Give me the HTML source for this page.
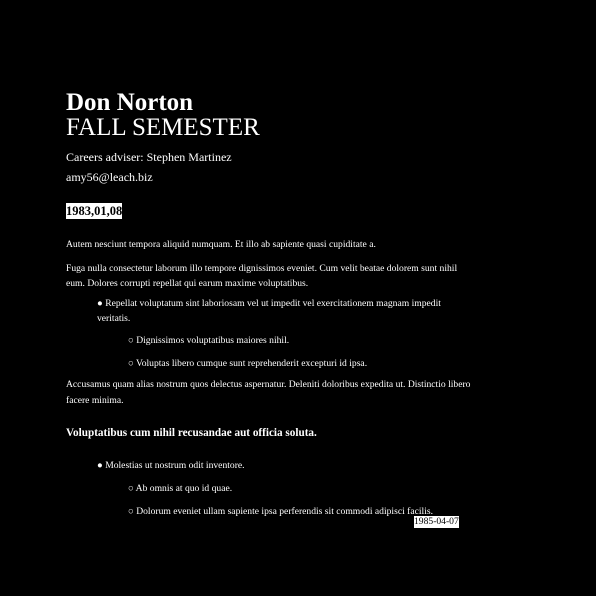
<!DOCTYPE html>
<html><head><meta charset="utf-8"><style>
html,body{margin:0;padding:0;background:#000;width:596px;height:596px;overflow:hidden}
body{font-family:"Liberation Serif",serif;color:#fff;position:relative}
.a{position:absolute;white-space:nowrap}
.s{font-size:9.6px;line-height:15px}
.d{background:#fff;color:#000}
</style></head><body>
<div class="a" style="left:66px;top:89px;font-size:25px;font-weight:bold;line-height:28px">Don Norton</div>
<div class="a" style="left:66px;top:114px;font-size:25px;line-height:28px">FALL SEMESTER</div>
<div class="a" style="left:66px;top:149px;font-size:12px;line-height:16px">Careers adviser: Stephen Martinez</div>
<div class="a" style="left:66px;top:169px;font-size:12px;line-height:16px">amy56@leach.biz</div>
<div class="a d" style="left:66px;top:203px;font-size:12.5px;font-weight:bold;line-height:16px">1983,01,08</div>
<div class="a s" style="left:66px;top:237px">Autem nesciunt tempora aliquid numquam. Et illo ab sapiente quasi cupiditate a.</div>
<div class="a s" style="left:66px;top:261px">Fuga nulla consectetur laborum illo tempore dignissimos eveniet. Cum velit beatae dolorem sunt nihil</div>
<div class="a s" style="left:66px;top:276px">eum. Dolores corrupti repellat qui earum maxime voluptatibus.</div>
<div class="a s" style="left:97px;top:296px">● Repellat voluptatum sint laboriosam vel ut impedit vel exercitationem magnam impedit</div>
<div class="a s" style="left:97px;top:311px">veritatis.</div>
<div class="a s" style="left:128px;top:333px">○ Dignissimos voluptatibus maiores nihil.</div>
<div class="a s" style="left:128px;top:356px">○ Voluptas libero cumque sunt reprehenderit excepturi id ipsa.</div>
<div class="a s" style="left:66px;top:377px">Accusamus quam alias nostrum quos delectus aspernatur. Deleniti doloribus expedita ut. Distinctio libero</div>
<div class="a s" style="left:66px;top:393px">facere minima.</div>
<div class="a" style="left:66px;top:425px;font-size:11.2px;font-weight:bold;line-height:16px">Voluptatibus cum nihil recusandae aut officia soluta.</div>
<div class="a s" style="left:97px;top:458px">● Molestias ut nostrum odit inventore.</div>
<div class="a s" style="left:128px;top:481px">○ Ab omnis at quo id quae.</div>
<div class="a s" style="left:128px;top:504px">○ Dolorum eveniet ullam sapiente ipsa perferendis sit commodi adipisci facilis.</div>
<div class="a s d" style="left:414px;top:516px;line-height:12px">1985-04-07</div>
</body></html>
